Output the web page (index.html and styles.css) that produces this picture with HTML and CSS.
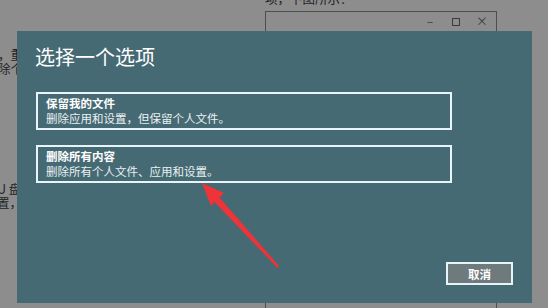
FILE: index.html
```html
<!DOCTYPE html>
<html lang="zh-CN">
<head>
    <meta charset="UTF-8">
    <meta name="viewport" content="width=device-width, initial-scale=1.0">
    <title>选择一个选项</title>
    <link rel="stylesheet" href="styles.css">
</head>
<body>
    <div class="screen">
        <!-- документ за затемнением -->
        <div class="doc-text doc-top">项，下图所示：</div>
        <div class="doc-text doc-left-a">，重<br>除个</div>
        <div class="doc-text doc-left-b">U 盘<br>置，</div>
        <div class="doc-window">
            <div class="win-controls">
                <span class="win-btn">–</span>
                <span class="win-btn win-max"></span>
                <span class="win-btn">×</span>
            </div>
        </div>

        <div class="dialog">
            <h1 class="dialog-title">选择一个选项</h1>
            <div class="option">
                <div class="option-name">保留我的文件</div>
                <div class="option-desc">删除应用和设置，但保留个人文件。</div>
            </div>
            <div class="option">
                <div class="option-name">删除所有内容</div>
                <div class="option-desc">删除所有个人文件、应用和设置。</div>
            </div>
            <button class="cancel-btn">取消</button>
        </div>

        <svg class="arrow" width="548" height="308" viewBox="0 0 548 308">
            <polygon points="202,183 224,193 219.5,197.5 279,266 277.5,268 214.5,202 211,206" fill="#ee3339"/>
        </svg>
    </div>
</body>
</html>
```

FILE: styles.css
```css
:root {
    --backdrop: #8d8d8d;
    --dialog-bg: #466a73;
    --line: #e8f5f8;
    --ink: #1f1f1f;
}

body {
    margin: 0;
    font-family: "Noto Sans CJK SC", "Noto Sans", sans-serif;
    background: var(--backdrop);
    overflow: hidden;
}

.screen {
    position: relative;
    width: 548px;
    height: 308px;
    background: var(--backdrop);
    overflow: hidden;
}

.doc-text {
    position: absolute;
    color: var(--ink);
    font-size: 12.5px;
    line-height: 14px;
}

.doc-top {
    left: 265px;
    top: -8px;
}

.doc-left-a {
    left: -2px;
    top: 48px;
}

.doc-left-b {
    left: -3px;
    top: 182px;
}

.doc-window {
    position: absolute;
    left: 265px;
    top: 11px;
    width: 230px;
    height: 320px;
    border: 1px solid #4e4e4e;
    border-bottom: none;
}

.win-controls {
    display: flex;
    justify-content: flex-end;
    gap: 13px;
    padding: 2px 8px 0 0;
    color: #3a3a3a;
    font-size: 12px;
    line-height: 14px;
}

.win-btn {
    width: 12px;
    text-align: center;
}

.win-max {
    width: 6px;
    height: 6px;
    margin: 4px 3px 0;
    border: 1px solid #3a3a3a;
}

.dialog {
    position: absolute;
    left: 17px;
    top: 31px;
    width: 515px;
    height: 272px;
    box-sizing: border-box;
    padding: 14px 19px 18px 19px;
    background: var(--dialog-bg);
    color: #fff;
    display: flex;
    flex-direction: column;
}

.dialog-title {
    margin: 0 0 23px -1px;
    font-size: 20px;
    line-height: 24px;
    font-weight: normal;
}

.option {
    width: 416px;
    height: 38px;
    box-sizing: border-box;
    border: 2px solid var(--line);
    padding: 2px 8px;
    margin-bottom: 15px;
}

.option-name {
    font-size: 11.5px;
    line-height: 15px;
    font-weight: bold;
}

.option-desc {
    font-size: 11.5px;
    line-height: 15px;
    color: #eaf1f3;
}

.cancel-btn {
    margin-top: auto;
    align-self: flex-end;
    width: 67px;
    height: 23px;
    background: #6e7a7c;
    border: 2px solid var(--line);
    color: #fff;
    font-family: inherit;
    font-size: 11.5px;
    font-weight: bold;
    padding: 0;
}

.arrow {
    position: absolute;
    left: 0;
    top: 0;
}
```
